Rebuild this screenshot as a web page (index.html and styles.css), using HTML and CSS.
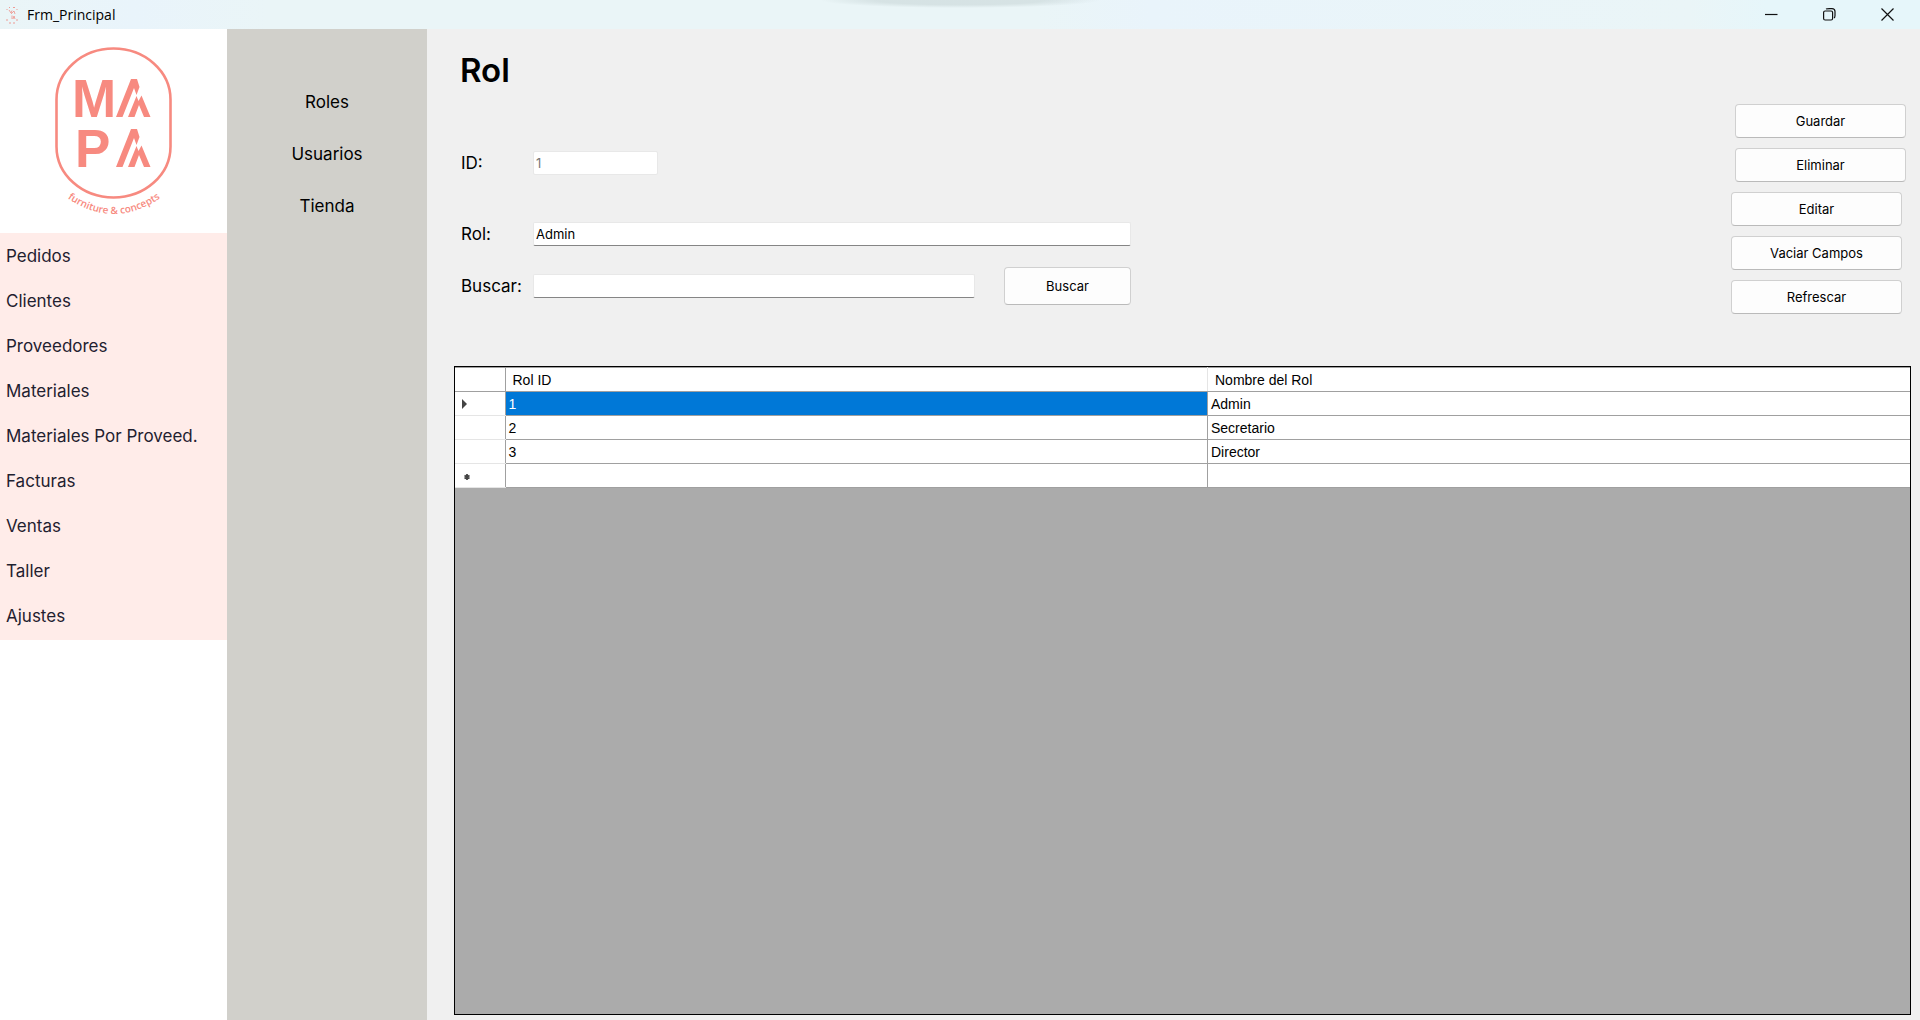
FILE: index.html
```
<!DOCTYPE html>
<html lang="es">
<head>
<meta charset="utf-8">
<title>Frm_Principal</title>
<link rel="stylesheet" href="styles.css">
</head>
<body>
<header class="titlebar">
  <svg class="app-icon" viewBox="0 0 12 18" aria-hidden="true">
    <g stroke="#f0857c" fill="none">
      <path d="M1 4V3M3 1.500H4M7 1.500H9M11 3V4M1 13V15M11 13V15M3 17H5M7 17H9" opacity=".8"/>
      <path d="M3 4L5 7L6 4.500M5 8L8 5L9 8M6 13V9.500M7 13L8 10L9 13" opacity=".7"/>
    </g>
  </svg>
  <span class="caption">Frm_Principal</span>
  <div class="window-buttons">
    <button type="button" aria-label="Minimizar"><svg width="13" height="13" viewBox="0 0 13 13"><path d="M0 6.500H12.500"/></svg></button>
    <button type="button" aria-label="Restaurar"><svg width="13" height="13" viewBox="0 0 13 13"><rect x=".6" y="3" width="9" height="9" rx="1.500"/><path d="M3 1C4 .5 5 .6 9 .6Q12 .6 12 3.500V7.500Q12 9.500 11 10"/></svg></button>
    <button type="button" aria-label="Cerrar"><svg width="13" height="13" viewBox="0 0 13 13"><path d="M.5 .5L12.500 12.500M12.500 .5L.5 12.500"/></svg></button>
  </div>
  <div class="snap-hint"></div>
</header>
<div class="shell">
  <aside class="sidebar">
    <svg class="logo" viewBox="0 0 227 204" role="img" aria-label="MAPA furniture &amp; concepts">
      <rect x="56.500" y="19.500" width="114" height="149" rx="57" ry="51" fill="none" stroke="#f78a80" stroke-width="2.600"/>
      <g fill="#f78a80">
        <text class="logo-letter" x="72" y="88">M</text>
        <text class="logo-letter" x="75" y="138">P</text>
        <g id="peak">
          <path d="M116 88L131 50H137L139.500 58L136.500 66L134 59L122.500 88Z"/>
          <path d="M128 88L136.500 67L138.500 72L141.500 66.500L150.500 88H144L139 76L134.500 88Z"/>
        </g>
        <use href="#peak" y="50"/>
        <path id="arc" d="M62 165Q113 205 166 165" fill="none"/>
        <text class="tagline" text-anchor="middle"><textPath href="#arc" startOffset="50%">furniture &amp; concepts</textPath></text>
      </g>
    </svg>
    <nav class="menu">
      <a href="#">Pedidos</a>
      <a href="#">Clientes</a>
      <a href="#">Proveedores</a>
      <a href="#">Materiales</a>
      <a href="#">Materiales Por Proveed.</a>
      <a href="#">Facturas</a>
      <a href="#">Ventas</a>
      <a href="#">Taller</a>
      <a href="#">Ajustes</a>
    </nav>
  </aside>
  <nav class="submenu">
    <a href="#">Roles</a>
    <a href="#">Usuarios</a>
    <a href="#">Tienda</a>
  </nav>
  <main class="content">
    <div class="top">
      <form class="form">
        <h1>Rol</h1>
        <div class="row row-id">
          <label for="id">ID:</label>
          <input id="id" class="short" type="text" value="1" disabled>
        </div>
        <div class="row">
          <label for="rol">Rol:</label>
          <input id="rol" type="text" value="Admin">
        </div>
        <div class="row row-search">
          <label for="buscar">Buscar:</label>
          <input id="buscar" type="text">
          <button class="btn search" type="button">Buscar</button>
        </div>
      </form>
      <div class="actions">
        <div class="group">
          <button class="btn" type="button">Guardar</button>
          <button class="btn" type="button">Eliminar</button>
        </div>
        <div class="group group-edit">
          <button class="btn" type="button">Editar</button>
          <button class="btn" type="button">Vaciar Campos</button>
          <button class="btn" type="button">Refrescar</button>
        </div>
      </div>
    </div>
    <div class="grid">
      <table>
        <colgroup><col class="handle"><col><col></colgroup>
        <thead>
          <tr><th></th><th scope="col">Rol ID</th><th scope="col">Nombre del Rol</th></tr>
        </thead>
        <tbody>
          <tr><th><svg class="mark" viewBox="0 0 12 10"><path d="M1 0V10L6 5Z"/></svg></th><td class="selected">1</td><td>Admin</td></tr>
          <tr><th></th><td>2</td><td>Secretario</td></tr>
          <tr><th></th><td>3</td><td>Director</td></tr>
          <tr><th><svg class="mark" viewBox="0 0 12 10"><path d="M6 3V9M3.500 4.500L8.500 7.500M8.500 4.500L3.500 7.500" stroke="#444" stroke-width="1.800"/></svg></th><td></td><td></td></tr>
        </tbody>
      </table>
    </div>
  </main>
</div>
</body>
</html>
```
FILE: styles.css
```
* { box-sizing: border-box; }

body {
  margin: 0;
  min-height: 100vh;
  display: flex;
  flex-direction: column;
  background: #f0f0f0;
  color: #000;
  font-family: Inter, sans-serif;
}

a { color: inherit; text-decoration: none; }

/* Window title bar */
.titlebar {
  position: relative;
  display: flex;
  align-items: center;
  height: 29px;
  padding: 0 4px 0 6px;
  background: linear-gradient(90deg, #eaf5f7, #e9f4fb 7%, #eaf5f7 14%, #eaf5f7 54%, #e9f4fb 60%, #eaf5f7 88%, #e6f6fa 92%);
}
.app-icon { width: 12px; height: 18px; }
.caption {
  margin-left: 9px;
  font: 14px/20px "Open Sans", sans-serif;
}
.window-buttons { display: flex; margin-left: auto; height: 28px; align-self: flex-start; }
.window-buttons button {
  display: flex;
  align-items: center;
  justify-content: center;
  width: 58px;
  padding: 0;
  border: 0;
  background: none;
}
.window-buttons svg { fill: none; stroke: #111; stroke-width: 1.2; }
/* Shade cast by the snap bar above the window */
.snap-hint {
  position: absolute;
  top: 0;
  left: 50%;
  width: 280px;
  height: 8px;
  margin-left: -140px;
  background: radial-gradient(ellipse 50% 100% at top, rgba(110, 130, 130, .16) 60%, transparent);
}

.shell { display: flex; flex: 1; }

/* Main menu */
.sidebar { flex: 0 0 227px; background: #fff; }
.logo { display: block; width: 100%; height: 204px; }
.logo-letter { font: 700 53px "Liberation Sans", Arial, sans-serif; }
.tagline { font: 600 10px "Open Sans", sans-serif; }
.menu {
  display: flex;
  flex-direction: column;
  padding: 1px 0;
  background: #ffece9;
  color: #1f2130;
  font-size: 17px;
}
.menu a { padding: 0 6px; line-height: 45px; }

.submenu {
  display: flex;
  flex: 0 0 200px;
  flex-direction: column;
  padding-top: 47px;
  background: #d1d0cb;
  font-size: 17px;
  line-height: 52px;
  text-align: center;
}

/* Page */
.content {
  display: flex;
  flex: 1;
  flex-direction: column;
  min-width: 0;
  padding: 0 9px 5px 27px;
}
.top { display: flex; justify-content: space-between; height: 337px; }
.form { width: 680px; padding: 19px 3px 0 6px; }
h1 { margin: 0; font-size: 33px; font-weight: 600; line-height: 44px; }
.row { display: flex; align-items: center; height: 52px; }
.row label { flex: 0 0 73px; padding-left: 1px; font-size: 17px; }
.row-id { margin: 45px 0 19px; }
.row input {
  flex: 1;
  min-width: 0;
  height: 24px;
  padding: 0 2px;
  border: 1px solid #e8e8e8;
  border-bottom-color: #858585;
  border-radius: 2px;
  background: #fff;
  color: #000;
  font: 13px/20px Inter, sans-serif;
}
.row .short { flex: 0 0 125px; border-bottom-color: #e8e8e8; color: #777; }

.btn {
  height: 34px;
  padding: 0;
  border: 1px solid #d0d0d0;
  border-bottom-color: #bababa;
  border-radius: 4px;
  background: #fdfdfd;
  color: #000;
  font: 13px/20px Inter, sans-serif;
}
.search { flex: 0 0 127px; height: 38px; margin-left: 29px; }

.actions { display: flex; flex: 0 0 180px; flex-direction: column; gap: 10px; padding-top: 75px; }
.group { display: grid; gap: 10px; margin-right: 5px; margin-left: 4px; }
.group-edit { margin-right: 9px; margin-left: 0; }

/* Data grid */
.grid { flex: 1; border: 1px solid #000; background: #ababab; }
table {
  width: 100%;
  table-layout: fixed;
  border-collapse: collapse;
  border-top: 1px solid #a0a0a0;
  background: #fff;
  font: 14px/16px "Liberation Sans", Arial, sans-serif;
}
.handle { width: 50px; }
th, td {
  height: 24px;
  padding: 0 3px;
  border: 1px solid #a0a0a0;
  border-right: 0;
  font-weight: 400;
  text-align: left;
}
thead th { padding: 0 7px; border-top: 0; }
thead th + th + th { border-left-color: #e5e5e5; }
tr th:first-child { border-left: 0; }
tbody th { padding: 0 6px; border-color: #e5e5e5; }
.selected { background: #0078d7; color: #fff; }
.mark { display: block; width: 12px; height: 10px; fill: #444; }
```
